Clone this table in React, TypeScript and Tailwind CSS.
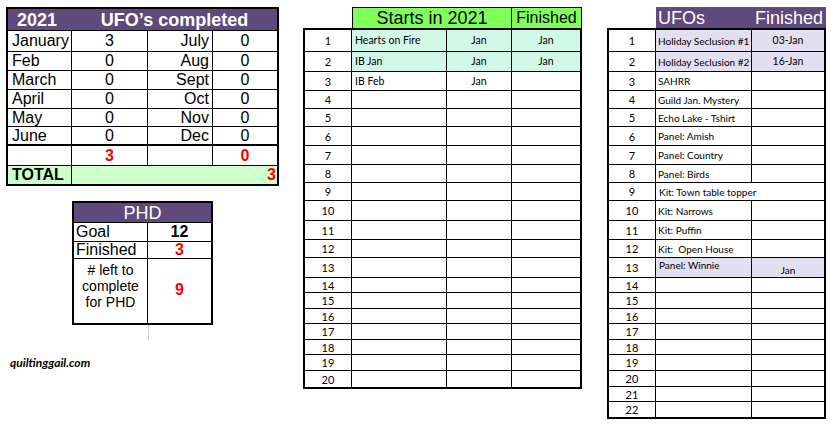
import React from 'react';

const arial = "font-['Liberation_Sans',Arial,sans-serif]";
const cal = "font-['Lato',sans-serif]";

const months: [string, string, string, string, string][] = [
    ['January', '3', 'July', '0', 'h-[21px]'],
    ['Feb', '0', 'Aug', '0', 'h-[19px]'],
    ['March', '0', 'Sept', '0', 'h-[19px]'],
    ['April', '0', 'Oct', '0', 'h-[19px]'],
    ['May', '0', 'Nov', '0', 'h-[18px]'],
    ['June', '0', 'Dec', '0', 'h-[19px] border-b-2'],
];

const rowH = [
    'h-[22px]', 'h-[20px]', 'h-[19px]', 'h-[18px]', 'h-[18px]', 'h-[19px]', 'h-[19px]', 'h-[18px]', 'h-[18px]', 'h-[20px]',
    'h-[19px]', 'h-[18px]', 'h-[20px]', 'h-[15px]', 'h-[16px]', 'h-[15px]', 'h-[16px]', 'h-[15px]', 'h-[16px]', 'h-[16px]',
    'h-[15px]', 'h-[15px]',
];

const starts: Record<number, [string, string, string]> = {
    1: ['Hearts on Fire', 'Jan', 'Jan'],
    2: ['IB Jan', 'Jan', 'Jan'],
    3: ['IB Feb', 'Jan', ''],
};

const ufos: Record<number, [string, string]> = {
    1: ['Holiday Seclusion #1', '03-Jan'],
    2: ['Holiday Seclusion #2', '16-Jan'],
    3: ['SAHRR', ''],
    4: ['Guild Jan. Mystery', ''],
    5: ['Echo Lake - Tshirt', ''],
    6: ['Panel: Amish', ''],
    7: ['Panel: Country', ''],
    8: ['Panel: Birds', ''],
    10: ['Kit: Narrows', ''],
    11: ['Kit: Puffin', ''],
    12: ['Kit:  Open House', ''],
};

const LeftTable = (): JSX.Element => (
    <div className={`w-[273px] border-2 border-black text-black text-[16px] leading-none ${arial}`}>
        <div className="flex h-[22px] border-b border-black bg-[#5f4a7d] text-white font-bold text-[18px]">
            <div className="w-[64px] flex items-center justify-center pr-[6px]">2021</div>
            <div className="flex-1 flex items-center justify-center">UFO’s completed</div>
        </div>
        {months.map(([m1, v1, m2, v2, h]) => (
            <div key={m1} className={`flex border-b border-black ${h}`}>
                <div className="w-[64px] border-r border-black flex items-center pl-[4px]">{m1}</div>
                <div className="w-[76px] border-r border-black flex items-center justify-center">{v1}</div>
                <div className="w-[65px] border-r border-black flex items-center justify-end pr-[3px]">{m2}</div>
                <div className="flex-1 flex items-center justify-center">{v2}</div>
            </div>
        ))}
        <div className="flex h-[20px] border-b border-black font-bold text-[#ff0000]">
            <div className="w-[64px] border-r border-black"></div>
            <div className="w-[76px] border-r border-black flex items-center justify-center">3</div>
            <div className="w-[65px] border-r border-black"></div>
            <div className="flex-1 flex items-center justify-center">0</div>
        </div>
        <div className="flex h-[18px] bg-[#ccffcc] font-bold">
            <div className="w-[64px] border-r border-black flex items-center pl-[4px]">TOTAL</div>
            <div className="flex-1 flex items-center justify-end pr-[1px] text-[#ff0000]">3</div>
        </div>
    </div>
);

const PhdTable = (): JSX.Element => (
    <div className={`ml-[66px] mt-[15px] w-[141px] border-2 border-black text-black text-[16px] leading-none ${arial}`}>
        <div className="h-[20px] border-b border-black bg-[#5f4a7d] text-white text-[18px] flex items-center justify-center">PHD</div>
        <div className="flex h-[19px] border-b border-black">
            <div className="w-[74px] border-r border-black flex items-center pl-[2px]">Goal</div>
            <div className="flex-1 flex items-center justify-center font-bold">12</div>
        </div>
        <div className="flex h-[17px] border-b border-black">
            <div className="w-[74px] border-r border-black flex items-center pl-[2px]">Finished</div>
            <div className="flex-1 flex items-center justify-center font-bold text-[#ff0000]">3</div>
        </div>
        <div className="flex h-[64px]">
            <div className="w-[74px] border-r border-black text-center text-[14px] leading-[16px] pt-[3px]">
                # left to<br />complete<br />for PHD
            </div>
            <div className="flex-1 flex items-center justify-center font-bold text-[#ff0000] pb-[2px]">9</div>
        </div>
    </div>
);

const StartsTable = (): JSX.Element => (
    <div className="w-[279px] ml-[24px]">
        <div className={`flex ml-[49px] h-[21px] text-black leading-none ${arial}`}>
            <div className="w-[160px] border border-b-0 border-black bg-[#80ff5a] flex items-center justify-center text-[18px]">Starts in 2021</div>
            <div className="w-[70px] border border-l-0 border-b-0 border-black bg-[#80ff5a] flex items-center justify-center text-[16px]">Finished</div>
        </div>
        <div className={`border-2 border-black text-black text-[10.5px] leading-none ${cal}`}>
            {rowH.slice(0, 20).map((h, i) => {
                const n = i + 1;
                const d = starts[n];
                const mint = n <= 2 ? 'bg-[#d2f8e8]' : '';
                return (
                    <div key={n} className={`flex ${h} ${n < 20 ? 'border-b border-black' : ''}`}>
                        <div className="w-[47px] border-r border-black flex items-center justify-center text-[11px]">{n}</div>
                        <div className={`w-[95px] border-r border-black flex items-center pl-[3px] ${mint}`}>{d ? d[0] : ''}</div>
                        <div className={`w-[65px] border-r border-black flex items-center justify-center ${mint}`}>{d ? d[1] : ''}</div>
                        <div className={`flex-1 flex items-center justify-center ${mint}`}>{d ? d[2] : ''}</div>
                    </div>
                );
            })}
        </div>
    </div>
);

const UfoTable = (): JSX.Element => (
    <div className="w-[219px] ml-[25px]">
        <div className={`flex ml-[49px] h-[21px] bg-[#5f4a7d] text-white text-[18px] leading-none items-center justify-between ${arial}`}>
            <span className="pl-[2px]">UFOs</span>
            <span className="pr-[3px]">Finished</span>
        </div>
        <div className={`border-2 border-black text-black text-[10px] leading-none ${cal}`}>
            {rowH.map((h, i) => {
                const n = i + 1;
                const d = ufos[n];
                const lav = n <= 2 || n === 13 ? 'bg-[#e2dff0]' : '';
                return (
                    <div key={n} className={`flex ${h} ${n < 22 ? 'border-b border-black' : ''}`}>
                        <div className="w-[47px] border-r border-black flex items-center justify-center text-[11px]">{n}</div>
                        {n === 9 ? (
                            <div className="flex-1 flex items-center pl-[3px]">Kit: Town table topper</div>
                        ) : n === 13 ? (
                            <>
                                <div className={`w-[96px] border-r border-black flex items-start pt-[2px] pl-[3px] ${lav}`}>Panel: Winnie</div>
                                <div className={`flex-1 flex items-end justify-center pb-[2px] ${lav}`}>Jan</div>
                            </>
                        ) : (
                            <>
                                <div className={`w-[96px] border-r border-black flex items-center pl-[2px] whitespace-pre ${lav}`}>{d ? d[0] : ''}</div>
                                <div className={`flex-1 flex items-center justify-center text-[10.5px] ${lav}`}>{d ? d[1] : ''}</div>
                            </>
                        )}
                    </div>
                );
            })}
        </div>
    </div>
);

const App = (): JSX.Element => {
    return (
        <div className="w-[836px] h-[425px] bg-white flex items-start pt-[7px] pl-[6px]">
            <div className="w-[273px]">
                <LeftTable />
                <PhdTable />
                <div className="ml-[142px] w-px h-[15px] bg-[#cfcfcf]"></div>
                <div className={`ml-[4px] mt-[16px] text-[12px] leading-[14px] font-bold italic text-black ${cal}`}>quiltinggail.com</div>
            </div>
            <StartsTable />
            <UfoTable />
        </div>
    );
};

export default App;
